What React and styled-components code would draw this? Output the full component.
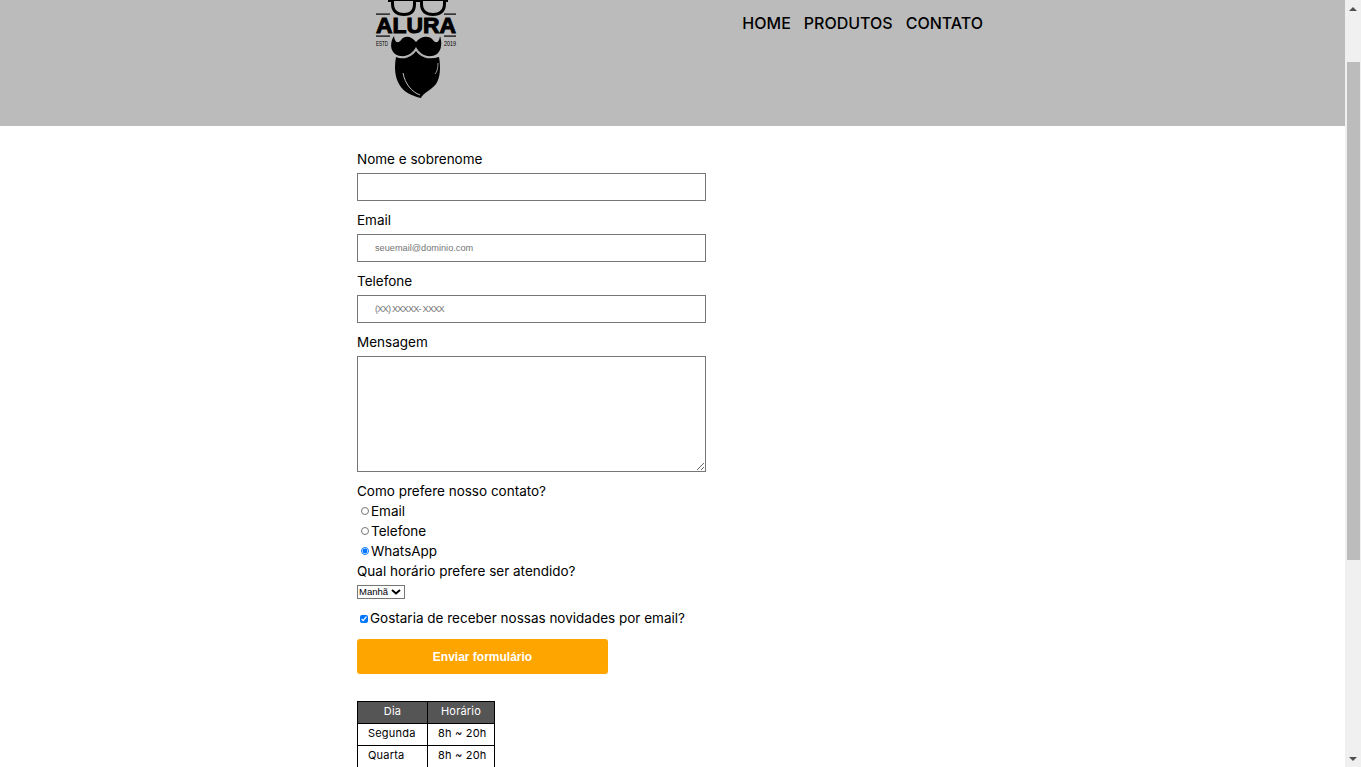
import React, { useLayoutEffect } from "react";
import styled, { createGlobalStyle } from "styled-components";

const GlobalStyle = createGlobalStyle`
  html {
    overflow-y: scroll;
  }
  body {
    margin: 0;
    background: #fff;
    color: #000;
    font-family: "Inter", "Liberation Sans", sans-serif;
  }
`;

const Page = styled.div`
  min-height: 1129px;
  margin-right: 16px;
`;

const Header = styled.header`
  background: #bbb;
  height: 195px;
`;

const HeaderInner = styled.div`
  width: 631px;
  margin: 0 auto;
  display: flex;
  justify-content: space-between;
`;

const Logo = styled.svg`
  display: block;
  margin-left: 13px;
  width: 95px;
  height: 170px;
`;

const Nav = styled.nav`
  display: flex;
  gap: 13px;
  margin-top: 82px;
  padding-right: 5px;
`;

const NavLink = styled.a`
  font-size: 16px;
  line-height: 20px;
  font-weight: 500;
  color: #000;
  text-decoration: none;
`;

const Main = styled.main`
  width: 631px;
  margin: 0 auto;
  padding-top: 23px;
`;

const Form = styled.form`
  display: flex;
  flex-direction: column;
  align-items: flex-start;
`;

const Label = styled.label`
  font-size: 13.5px;
  line-height: 20px;
  margin-bottom: ${(p) => (p.$tight ? "0" : "4px")};
`;

const Input = styled.input`
  box-sizing: border-box;
  width: 349px;
  height: 28px;
  margin: 0 0 9px;
  padding: 0 17px;
  border: 1px solid #767676;
  border-radius: 0;
  font-family: "Liberation Sans", sans-serif;
  font-size: 9.2px;

  &::placeholder {
    letter-spacing: ${(p) => p.$placeholderSpacing || 0}px;
  }
`;

const Textarea = styled.textarea`
  display: block;
  box-sizing: border-box;
  width: 349px;
  height: 116px;
  margin: 0 0 9px;
  border: 1px solid #767676;
  border-radius: 0;
`;

const OptionRow = styled.label`
  display: flex;
  align-items: center;
  font-size: 13.5px;
  line-height: 20px;
`;

const Radio = styled.input.attrs({ type: "radio" })`
  width: 8px;
  height: 8px;
  margin: 0 2px 0 4px;
`;

const chevron = encodeURIComponent(
  '<svg xmlns="http://www.w3.org/2000/svg" width="10" height="6"><path d="M1 1l4 3.5L9 1" fill="none" stroke="#000" stroke-width="2"/></svg>'
);

const Select = styled.select`
  display: block;
  appearance: none;
  box-sizing: border-box;
  width: 48px;
  height: 14px;
  margin: 4px 0 9px;
  padding: 0 0 0 1px;
  border: 1px solid #767676;
  border-radius: 0;
  background: #fff url("data:image/svg+xml,${chevron}") no-repeat 33px 3px;
  font-family: "Liberation Sans", sans-serif;
  font-size: 9.5px;
  line-height: 12px;
`;

const Check = styled.input.attrs({ type: "checkbox" })`
  width: 8px;
  height: 8px;
  margin: 2px 2px 0 3px;
`;

const SubmitButton = styled.button`
  width: 251px;
  height: 35px;
  margin-top: 11px;
  border: none;
  border-radius: 3px;
  background: orange;
  color: #fff;
  font-family: "Liberation Sans", sans-serif;
  font-size: 12px;
  font-weight: bold;
`;

const Table = styled.table`
  margin-top: 27px;
  border-collapse: collapse;
  font-size: 11px;
  letter-spacing: 0.2px;
`;

const Th = styled.th`
  height: 18px;
  padding: 0 0 3px;
  border: 1px solid #000;
  background: #555;
  color: #fff;
  font-weight: 400;
  width: ${(p) => p.$width}px;
`;

const Td = styled.td`
  height: 18px;
  padding: 0 0 3px 10px;
  border: 1px solid #000;
  text-align: left;
`;

const ScrollTrack = styled.div`
  position: fixed;
  top: 0;
  right: 0;
  bottom: 0;
  width: 16px;
  box-sizing: border-box;
  padding: 7px 0 6px;
  background: #f0f0f0;
  display: flex;
  flex-direction: column;
  align-items: center;
`;

const ScrollArrow = styled.svg`
  display: block;
  width: 8px;
  height: 4px;
  fill: #505050;
`;

const ScrollRail = styled.div`
  flex: 1;
  width: 100%;
  padding-top: 51px;
`;

const ScrollThumb = styled.div`
  width: 13px;
  height: 498px;
  margin-left: 2px;
  background: #bcbcbc;
`;

const hours = [
  ["Segunda", "8h ~ 20h"],
  ["Quarta", "8h ~ 20h"],
  ["Sexta", "8h ~ 20h"],
  ["Sábado", "8h ~ 17h"],
];

const BarberLogo = () => (
  <Logo viewBox="370 -69 95 170" aria-label="Alura">
    <g fill="#000">
      <rect x="388" y="-3" width="60" height="5" />
      <path d="M391 -4h25v8c0 8-4 12-12 12s-13-4-13-12zM420 -4h26v8c0 8-5 12-13 12s-13-4-13-12z" />
      <path d="M394 1h19v3c0 6-3 9-9 9s-10-3-10-9zM423 1h20v3c0 6-4 9-10 9s-10-3-10-9z" fill="#bbb" />
      <rect x="376" y="13.5" width="14" height="1.2" />
      <rect x="444" y="13.5" width="12" height="1.2" />
      <text
        x="376"
        y="32.5"
        textLength="80"
        lengthAdjust="spacingAndGlyphs"
        fontFamily="'Liberation Sans', sans-serif"
        fontWeight="bold"
        fontSize="22"
        stroke="#000"
        strokeWidth="1"
      >
        ALURA
      </text>
      <rect x="376" y="35.5" width="14" height="1.2" />
      <rect x="444" y="35.5" width="12" height="1.2" />
      <text
        x="376"
        y="46"
        textLength="12"
        lengthAdjust="spacingAndGlyphs"
        fontFamily="'Liberation Sans', sans-serif"
        fontSize="8"
      >
        ESTD
      </text>
      <text
        x="444"
        y="46"
        textLength="12"
        lengthAdjust="spacingAndGlyphs"
        fontFamily="'Liberation Sans', sans-serif"
        fontSize="8"
      >
        2019
      </text>
      <path d="M396 57C402 60 411 58 416 51 421 58 430 60 439 57 441 68 440 78 436 84 430 91 423 93 421 98 412 96 403 92 399 84 395 77 394 68 396 57Z" />
      <path d="M416 42C411 36 405 35 401 40 399 43 395 44 394 36 390 42 390 50 395 54 403 59 412 55 416 47 420 55 429 59 437 54 442 50 442 42 440 36 439 44 435 43 433 40 429 35 421 36 416 42Z" />
    </g>
    <path d="M404 58C409 57 413 54 416 48 419 54 423 57 428 58" fill="none" stroke="#999" strokeWidth="0.7" />
    <path d="M403 73C405 84 412 92 420 95" fill="none" stroke="#bbb" strokeWidth="1" />
    <path d="M438 63C438 68 437 72 435 74" fill="none" stroke="#bbb" strokeWidth="0.8" />
  </Logo>
);

export default function App() {
  useLayoutEffect(() => {
    window.scrollTo(0, 69);
  }, []);

  return (
    <Page>
      <GlobalStyle />
      <Header>
        <HeaderInner>
          <BarberLogo />
          <Nav>
            <NavLink href="#">HOME</NavLink>
            <NavLink href="#">PRODUTOS</NavLink>
            <NavLink href="#">CONTATO</NavLink>
          </Nav>
        </HeaderInner>
      </Header>
      <Main>
        <Form onSubmit={(e) => e.preventDefault()}>
          <Label htmlFor="nome">Nome e sobrenome</Label>
          <Input id="nome" type="text" />
          <Label htmlFor="email">Email</Label>
          <Input id="email" type="email" placeholder="seuemail@dominio.com" />
          <Label htmlFor="telefone">Telefone</Label>
          <Input id="telefone" type="tel" placeholder="(XX) XXXXX- XXXX" $placeholderSpacing={-0.8} />
          <Label htmlFor="mensagem">Mensagem</Label>
          <Textarea id="mensagem" />
          <Label as="span" $tight>
            Como prefere nosso contato?
          </Label>
          <OptionRow>
            <Radio name="contato" />
            Email
          </OptionRow>
          <OptionRow>
            <Radio name="contato" />
            Telefone
          </OptionRow>
          <OptionRow>
            <Radio name="contato" defaultChecked />
            WhatsApp
          </OptionRow>
          <Label htmlFor="horario" $tight>
            Qual horário prefere ser atendido?
          </Label>
          <Select id="horario">
            <option>Manhã</option>
            <option>Tarde</option>
            <option>Noite</option>
          </Select>
          <OptionRow>
            <Check defaultChecked />
            Gostaria de receber nossas novidades por email?
          </OptionRow>
          <SubmitButton type="submit">Enviar formulário</SubmitButton>
        </Form>
        <Table>
          <thead>
            <tr>
              <Th $width={69}>Dia</Th>
              <Th $width={66}>Horário</Th>
            </tr>
          </thead>
          <tbody>
            {hours.map(([day, time]) => (
              <tr key={day}>
                <Td>{day}</Td>
                <Td>{time}</Td>
              </tr>
            ))}
          </tbody>
        </Table>
      </Main>
      <ScrollTrack>
        <ScrollArrow viewBox="0 0 8 4">
          <path d="M4 0l4 4H0z" />
        </ScrollArrow>
        <ScrollRail>
          <ScrollThumb />
        </ScrollRail>
        <ScrollArrow viewBox="0 0 8 4">
          <path d="M0 0h8L4 4z" />
        </ScrollArrow>
      </ScrollTrack>
    </Page>
  );
}
